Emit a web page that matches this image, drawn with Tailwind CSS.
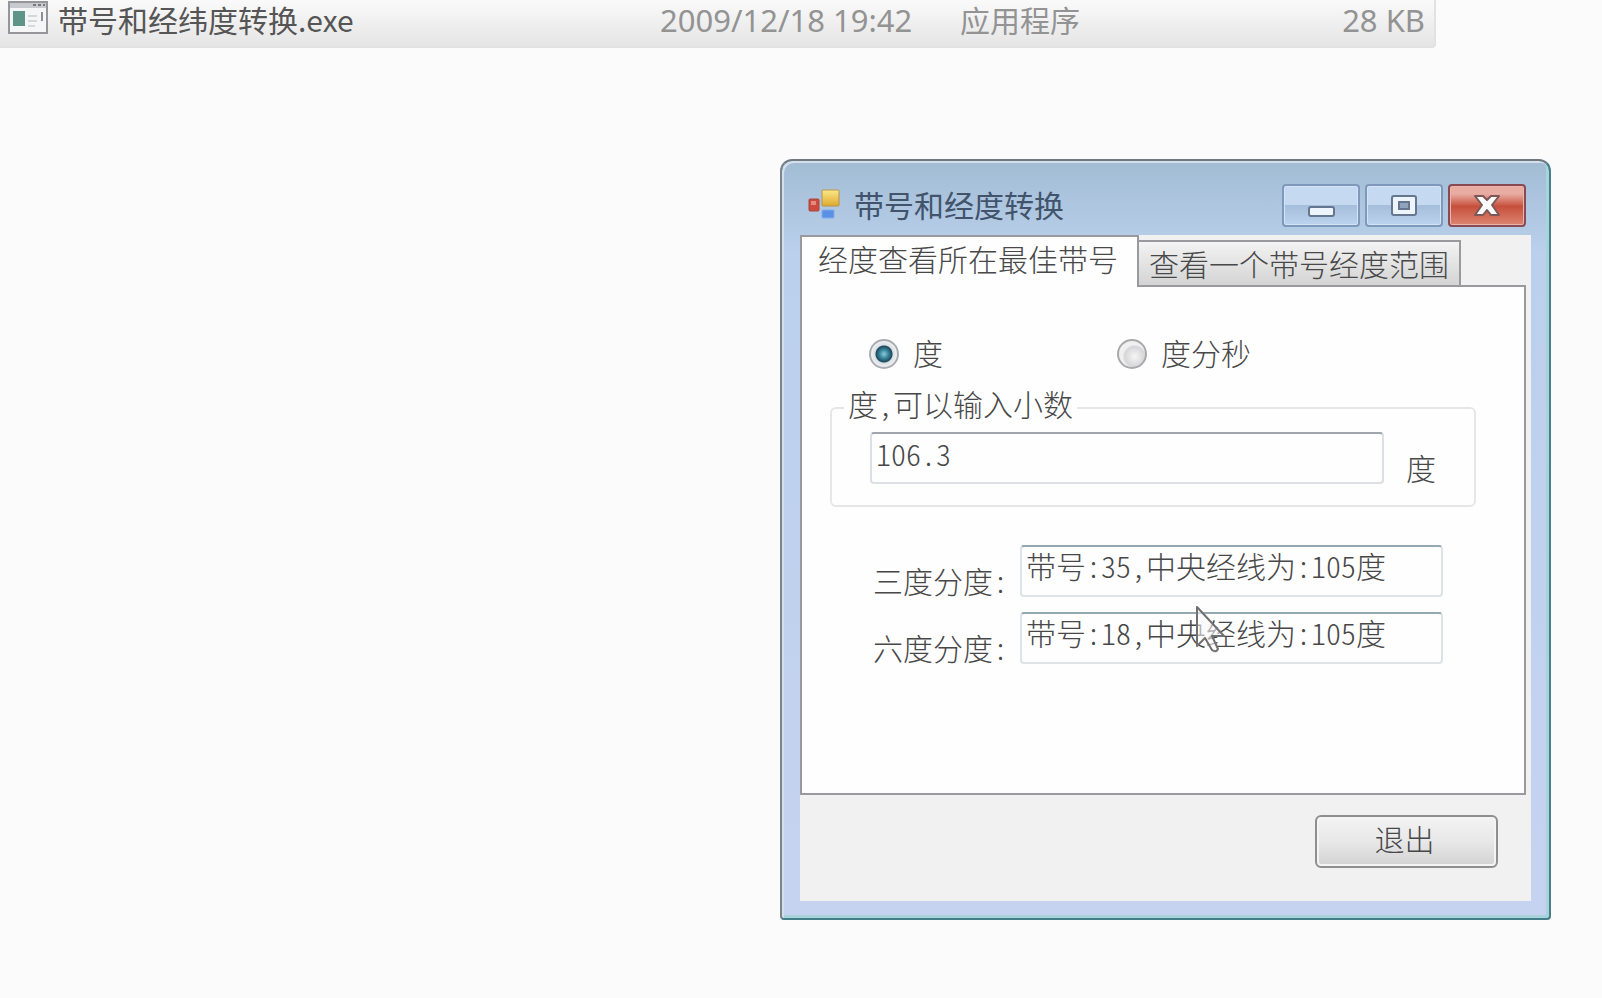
<!DOCTYPE html>
<html lang="zh-CN">

<head>
    <meta charset="UTF-8">
    <meta name="viewport" content="width=device-width, initial-scale=1.0">
    <script src="https://cdn.jsdelivr.net/npm/@tailwindcss/browser@4"></script>

    <title>带号和经度转换</title>
</head>

<body class="relative min-h-screen overflow-hidden bg-[#fbfbfb] font-['Noto_Sans_CJK_SC',sans-serif] text-[30px] leading-[30px] font-light text-[#484848]">

    <!-- file list -->
    <div class="mr-[166px] rounded-br border-r-2 border-b-2 border-[#e2e2e2] bg-linear-to-b from-[#fafafa] to-[#e5e5e5]">
        <table class="w-full table-fixed text-left font-normal">
            <tbody>
                <tr class="h-[46px] align-top text-[#939393]">
                    <td class="pl-2">
                        <div class="flex items-start gap-[10px] text-[#555555]">
                            <svg class="mt-px h-[33px] w-10" viewBox="0 0 40 33" fill="none">
                                <rect x="1" y="1" width="38" height="31" fill="#f4f6f8" stroke="#96969a" stroke-width="2" />
                                <rect x="2" y="2" width="36" height="5" fill="#c9cacf" />
                                <path d="M25 4h3M30 4h3M35 4h2" stroke="#77777c" stroke-width="2" />
                                <rect x="5" y="10" width="12" height="15" fill="#5f9488" />
                                <path d="M20 15h9M20 20h9M20 25h7" stroke="#d3d8dc" stroke-width="2" />
                                <path d="M34 11v9" stroke="#8f9095" stroke-width="2" />
                            </svg>
                            <span class="pt-1">带号和经纬度转换.exe</span>
                        </div>
                    </td>
                    <td class="w-[300px] pt-[5px] font-['Noto_Sans',sans-serif] text-[31px]">2009/12/18 19:42</td>
                    <td class="w-[240px] pt-1">应用程序</td>
                    <td class="w-[234px] pt-[5px] pr-[9px] text-right font-['Noto_Sans',sans-serif] text-[31px]">28 KB</td>
                </tr>
            </tbody>
        </table>
    </div>

    <!-- window -->
    <main class="absolute top-[159px] right-[51px] w-[771px] max-w-full rounded-t-xl rounded-b-sm border-2 border-t-[#6e7a80] border-r-[#457f8a] border-b-[#457f8a] border-l-[#7d858c] bg-linear-to-b from-[#a2bcd4] via-[#bad0ec] via-12% to-[#c6d3f0] px-[18px] pb-[17px] shadow-[inset_2px_2px_0_#d3e0ec,inset_-3px_-3px_0_#a9d3dc]">
        <header class="flex h-[74px] items-start pt-[23px] pr-[5px] pl-2">
            <svg class="mt-1 h-8 w-8" viewBox="0 0 32 32">
                <defs>
                    <linearGradient id="gold" x1="0" y1="0" x2="0" y2="1">
                        <stop offset="0" stop-color="#fbe88a" />
                        <stop offset="1" stop-color="#dfa92c" />
                    </linearGradient>
                </defs>
                <rect x="1" y="11" width="10" height="12" rx="1" fill="#cd4a3c" stroke="#a8453f" />
                <rect x="3" y="13" width="5" height="4" fill="#e48b7d" />
                <rect x="14" y="2" width="17" height="16" rx="1" fill="url(#gold)" stroke="#b89445" />
                <rect x="14" y="22" width="12" height="8" rx="1" fill="#5b91e4" stroke="#82aaea" />
            </svg>
            <h1 class="ml-3.5 flex-1 pt-[5px] font-normal text-[#41546c]">带号和经度转换</h1>
            <div class="flex gap-[5px]">
                <button type="button" aria-label="最小化" class="flex h-[43px] w-[78px] items-center justify-center rounded border-2 border-[#7e99bb] bg-linear-to-b from-[#c5d9f0] from-50% via-[#a5bedb] via-50% to-[#bdd3ee] shadow-[inset_0_0_0_1px_#d5e4f5]">
                    <svg class="h-7 w-8" viewBox="0 0 32 28">
                        <rect x="4" y="15" width="25" height="9" rx="2" fill="#eef4fb" stroke="#64778f" stroke-width="2" />
                    </svg>
                </button>
                <button type="button" aria-label="最大化" class="flex h-[43px] w-[78px] items-center justify-center rounded border-2 border-[#7e99bb] bg-linear-to-b from-[#c5d9f0] from-50% via-[#a5bedb] via-50% to-[#bdd3ee] shadow-[inset_0_0_0_1px_#d5e4f5]">
                    <svg class="h-7 w-8" viewBox="0 0 32 28">
                        <rect x="4" y="4" width="24" height="19" rx="2" fill="#eef4fb" stroke="#64778f" stroke-width="2" />
                        <rect x="11" y="10" width="10" height="7" fill="#8fa3bd" stroke="#64778f" stroke-width="2" />
                    </svg>
                </button>
                <button type="button" aria-label="关闭" class="flex h-[43px] w-[78px] items-center justify-center rounded border-2 border-[#8a4a54] bg-linear-to-b from-[#e8aca3] from-20% via-[#c64f3c] via-52% to-[#db8471] shadow-[inset_0_0_0_1px_#ecb5ac]">
                    <svg class="h-7 w-8" viewBox="0 0 32 28">
                        <path d="M4 4h8l4 4 4-4h8l-7 9 7 10h-8l-4-5-4 5H4l7-10z" fill="#fafafa" stroke="#7d5858" stroke-width="2" stroke-linejoin="round" />
                    </svg>
                </button>
            </div>
        </header>

        <div class="bg-[#f1f1f1] pr-[5px] pb-[33px] [font-feature-settings:'hwid']">
            <!-- tabs -->
            <div role="tablist" class="flex items-end">
                <button type="button" role="tab" aria-selected="true" class="relative z-10 -mb-0.5 h-[52px] border-2 border-b-0 border-[#9a9a9e] bg-[#fefefe] pr-[19px] pb-2 pl-4">经度查看所在最佳带号</button>
                <button type="button" role="tab" aria-selected="false" class="h-[45px] border-2 border-b-0 border-l-0 border-[#9a9a9e] bg-linear-to-b from-[#f3f3f3] to-[#d4d4d4] px-[10px] pb-0.5">查看一个带号经度范围</button>
            </div>

            <form class="border-2 border-[#9a9a9e] bg-[#fefefe] pt-[52px] pr-12 pb-[129px] pl-7">
                <div class="flex">
                    <label class="ml-[39px] flex w-[248px] items-start gap-3.5">
                        <input type="radio" name="unit" checked class="h-[30px] w-[30px] appearance-none rounded-full border-2 border-[#a9adb2] bg-[radial-gradient(circle_at_50%_50%,#8ccbdc_0,#3f8ba0_4px,#1c4a5e_8px,#d9dde2_9px,#eceef0_12px)]">
                        <span class="-mt-0.5">度</span>
                    </label>
                    <label class="flex items-start gap-3.5">
                        <input type="radio" name="unit" class="h-[30px] w-[30px] appearance-none rounded-full border-2 border-[#a9a9ac] bg-[radial-gradient(circle_at_60%_60%,#f6f6f6_0,#d6d6d8_10px,#f0f0f0_12px)]">
                        <span class="-mt-0.5">度分秒</span>
                    </label>
                </div>

                <fieldset class="mt-[19px] rounded-md border-2 border-[#e6e6e6] pr-[38px] pb-[21px] pl-3">
                    <legend class="px-1 pb-2.5">度,可以输入小数</legend>
                    <div class="ml-[26px] flex gap-[22px] pt-1">
                        <input id="degree" type="text" value="106.3" class="h-[52px] min-w-0 flex-1 rounded border-2 border-[#dcdfe3] border-t-[#a0a6ab] px-1 pb-2.5">
                        <label for="degree" class="pt-5">度</label>
                    </div>
                </fieldset>

                <div class="mt-[38px] mr-[33px] ml-[43px] flex flex-col gap-[15px]">
                    <div class="flex items-start gap-3">
                        <label for="zone3" class="pt-5">三度分度:</label>
                        <input id="zone3" type="text" value="带号:35,中央经线为:105度" class="h-[52px] min-w-0 flex-1 rounded-sm border-2 border-[#e0e3e6] border-t-[#94a8b2] px-1 pb-3">
                    </div>
                    <div class="flex items-start gap-3">
                        <label for="zone6" class="pt-5">六度分度:</label>
                        <input id="zone6" type="text" value="带号:18,中央经线为:105度" class="h-[52px] min-w-0 flex-1 rounded-sm border-2 border-[#e0e3e6] border-t-[#94a8b2] px-1 pb-3">
                    </div>
                </div>
            </form>

            <div class="flex justify-end pt-5 pr-7">
                <button type="button" class="h-[53px] w-[183px] rounded-md border-2 border-[#8f8f8f] bg-linear-to-b from-[#f3f3f3] via-[#e8e8e8] via-50% to-[#d2d2d2] pr-1 pb-2 shadow-[inset_0_0_0_2px_#f4f4f4]">退出</button>
            </div>
        </div>

        <!-- mouse pointer -->
        <svg class="pointer-events-none absolute top-[443px] left-[413px] h-[50px] w-8" viewBox="0 0 32 50">
            <path d="M2 3v39l8-8 7 12q4 3 6-1l-6-13h12z" fill="#f8f8f8" fill-opacity=".6" stroke="#707070" stroke-width="2" stroke-linejoin="round" />
        </svg>
    </main>

</body>

</html>
